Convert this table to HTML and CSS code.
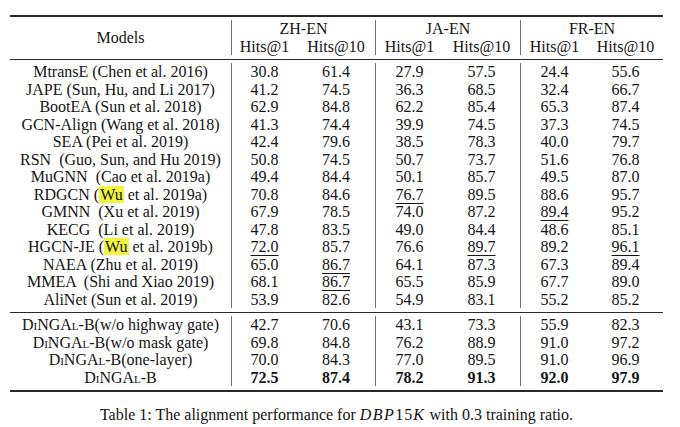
FILE: index.html
```html
<!DOCTYPE html>
<html>
<head>
<meta charset="utf-8">
<link rel="stylesheet" href="styles.css">
</head>
<body>
<div class="page">
  <div class="table">
    <div class="rule thick"></div>
    <div class="sec">
      <div class="head">
        <div class="cell models">Models</div>
        <div class="cell group sep">ZH-EN</div>
        <div class="cell group sep">JA-EN</div>
        <div class="cell group sep">FR-EN</div>
        <div class="cell sep">Hits@1</div>
        <div class="cell">Hits@10</div>
        <div class="cell sep">Hits@1</div>
        <div class="cell">Hits@10</div>
        <div class="cell sep">Hits@1</div>
        <div class="cell">Hits@10</div>
      </div>
    </div>
    <div class="rule"></div>
    <div class="sec">
      <div class="row"><div class="cell">MtransE (Chen et al. 2016)</div><div class="cell sep">30.8</div><div class="cell">61.4</div><div class="cell sep">27.9</div><div class="cell">57.5</div><div class="cell sep">24.4</div><div class="cell">55.6</div></div>
      <div class="row"><div class="cell">JAPE (Sun, Hu, and Li 2017)</div><div class="cell sep">41.2</div><div class="cell">74.5</div><div class="cell sep">36.3</div><div class="cell">68.5</div><div class="cell sep">32.4</div><div class="cell">66.7</div></div>
      <div class="row"><div class="cell">BootEA (Sun et al. 2018)</div><div class="cell sep">62.9</div><div class="cell">84.8</div><div class="cell sep">62.2</div><div class="cell">85.4</div><div class="cell sep">65.3</div><div class="cell">87.4</div></div>
      <div class="row"><div class="cell">GCN-Align (Wang et al. 2018)</div><div class="cell sep">41.3</div><div class="cell">74.4</div><div class="cell sep">39.9</div><div class="cell">74.5</div><div class="cell sep">37.3</div><div class="cell">74.5</div></div>
      <div class="row"><div class="cell">SEA (Pei et al. 2019)</div><div class="cell sep">42.4</div><div class="cell">79.6</div><div class="cell sep">38.5</div><div class="cell">78.3</div><div class="cell sep">40.0</div><div class="cell">79.7</div></div>
      <div class="row"><div class="cell">RSN  (Guo, Sun, and Hu 2019)</div><div class="cell sep">50.8</div><div class="cell">74.5</div><div class="cell sep">50.7</div><div class="cell">73.7</div><div class="cell sep">51.6</div><div class="cell">76.8</div></div>
      <div class="row"><div class="cell">MuGNN  (Cao et al. 2019a)</div><div class="cell sep">49.4</div><div class="cell">84.4</div><div class="cell sep">50.1</div><div class="cell">85.7</div><div class="cell sep">49.5</div><div class="cell">87.0</div></div>
      <div class="row"><div class="cell">RDGCN (<span class="hl">Wu</span> et al. 2019a)</div><div class="cell sep">70.8</div><div class="cell">84.6</div><div class="cell sep"><u>76.7</u></div><div class="cell">89.5</div><div class="cell sep">88.6</div><div class="cell">95.7</div></div>
      <div class="row"><div class="cell">GMNN  (Xu et al. 2019)</div><div class="cell sep">67.9</div><div class="cell">78.5</div><div class="cell sep">74.0</div><div class="cell">87.2</div><div class="cell sep"><u>89.4</u></div><div class="cell">95.2</div></div>
      <div class="row"><div class="cell">KECG  (Li et al. 2019)</div><div class="cell sep">47.8</div><div class="cell">83.5</div><div class="cell sep">49.0</div><div class="cell">84.4</div><div class="cell sep">48.6</div><div class="cell">85.1</div></div>
      <div class="row"><div class="cell">HGCN-JE (<span class="hl">Wu</span> et al. 2019b)</div><div class="cell sep"><u>72.0</u></div><div class="cell">85.7</div><div class="cell sep">76.6</div><div class="cell"><u>89.7</u></div><div class="cell sep">89.2</div><div class="cell"><u>96.1</u></div></div>
      <div class="row"><div class="cell">NAEA (Zhu et al. 2019)</div><div class="cell sep">65.0</div><div class="cell"><u>86.7</u></div><div class="cell sep">64.1</div><div class="cell">87.3</div><div class="cell sep">67.3</div><div class="cell">89.4</div></div>
      <div class="row"><div class="cell">MMEA  (Shi and Xiao 2019)</div><div class="cell sep">68.1</div><div class="cell"><u>86.7</u></div><div class="cell sep">65.5</div><div class="cell">85.9</div><div class="cell sep">67.7</div><div class="cell">89.0</div></div>
      <div class="row"><div class="cell">AliNet (Sun et al. 2019)</div><div class="cell sep">53.9</div><div class="cell">82.6</div><div class="cell sep">54.9</div><div class="cell">83.1</div><div class="cell sep">55.2</div><div class="cell">85.2</div></div>
    </div>
    <div class="rule"></div>
    <div class="sec">
      <div class="row"><div class="cell"><span class="sc">DiNGAl-B</span>(w/o highway gate)</div><div class="cell sep">42.7</div><div class="cell">70.6</div><div class="cell sep">43.1</div><div class="cell">73.3</div><div class="cell sep">55.9</div><div class="cell">82.3</div></div>
      <div class="row"><div class="cell"><span class="sc">DiNGAl-B</span>(w/o mask gate)</div><div class="cell sep">69.8</div><div class="cell">84.8</div><div class="cell sep">76.2</div><div class="cell">88.9</div><div class="cell sep">91.0</div><div class="cell">97.2</div></div>
      <div class="row"><div class="cell"><span class="sc">DiNGAl-B</span>(one-layer)</div><div class="cell sep">70.0</div><div class="cell">84.3</div><div class="cell sep">77.0</div><div class="cell">89.5</div><div class="cell sep">91.0</div><div class="cell">96.9</div></div>
      <div class="row best"><div class="cell"><span class="sc">DiNGAl-B</span></div><div class="cell sep">72.5</div><div class="cell">87.4</div><div class="cell sep">78.2</div><div class="cell">91.3</div><div class="cell sep">92.0</div><div class="cell">97.9</div></div>
    </div>
    <div class="rule thick"></div>
  </div>
  <p class="caption">Table 1: The alignment performance for <span class="math"><i>DBP</i>15<i>K</i></span> with 0.3 training ratio.</p>
</div>
</body>
</html>
```

FILE: styles.css
```css
html, body {
  margin: 0;
  padding: 0;
  background: #ffffff;
}

body {
  font-family: "Liberation Serif", "Times New Roman", serif;
  color: #141414;
}

.page {
  padding: 15px 0 0 10px;
}

.table {
  width: 653px;
}

.rule {
  border-top: 1px solid #2a2a2a;
}

.rule.thick {
  border-top-width: 2px;
}

.sec {
  padding: 3px 0 4px;
}

.head,
.row {
  display: grid;
  grid-template-columns: 221px 66px 78px 68px 77px 68px 75px;
}

.head {
  grid-template-rows: 17.5px 17.5px;
}

.cell {
  font-size: 16px;
  line-height: 17.5px;
  height: 17.5px;
  text-align: center;
  white-space: pre;
}

.head .models {
  grid-row: 1 / 3;
  height: 35px;
  line-height: 35px;
}

.head .group {
  grid-column: span 2;
}

.sep {
  border-left: 1px solid #707070;
}

u {
  text-decoration: underline;
  text-decoration-thickness: 1px;
  text-underline-offset: 3px;
}

.hl {
  background: #f2f43c;
  padding: 0 1px;
}

.sc {
  font-variant: small-caps;
}

.best .cell:not(:first-child) {
  font-weight: bold;
}

.caption {
  width: 653px;
  margin: 14px 0 0;
  text-align: center;
  font-size: 16px;
  line-height: 17.5px;
}

.math {
  letter-spacing: 1px;
}

.math i {
  letter-spacing: 1.5px;
}
```
